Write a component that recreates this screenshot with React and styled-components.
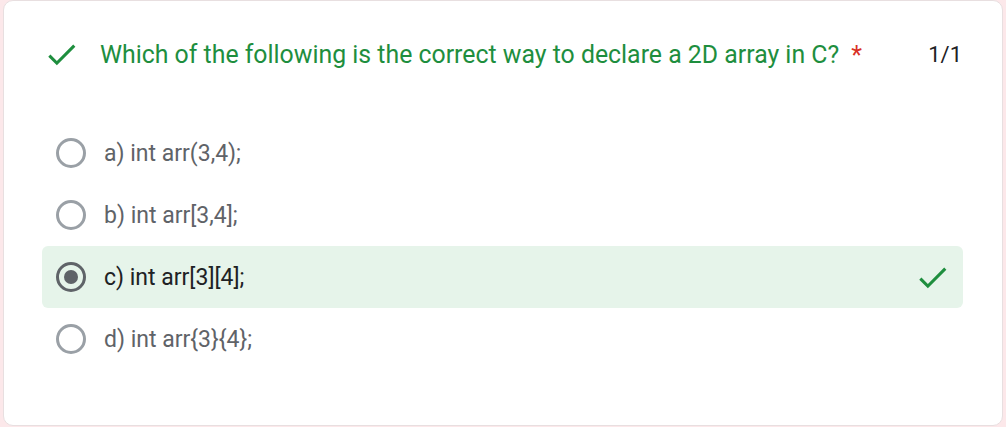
import React from "react";
import styled, { createGlobalStyle } from "styled-components";

const GlobalStyle = createGlobalStyle`
  html, body {
    margin: 0;
    padding: 0;
    background: #fce8ea;
  }
  body {
    font-family: Roboto, "Liberation Sans", Arial, sans-serif;
  }
`;

const Page = styled.div`
  padding: 0 3px 1px;
  height: 427px;
  box-sizing: border-box;
`;

const Card = styled.div`
  background: #fff;
  border: 1px solid #e8dfe0;
  border-radius: 10px;
  height: 426px;
  box-sizing: border-box;
  padding: 34px 39px 0 38px;
`;

const TitleRow = styled.div`
  display: flex;
  align-items: center;
  height: 38px;
`;

const TitleIcon = styled.div`
  width: 37px;
  height: 37px;
  display: flex;
  align-items: center;
  justify-content: center;
  margin-left: 1px;
  margin-right: 20px;
`;

const Title = styled.div`
  flex: 1;
  color: #1e8e3e;
  font-size: 24.85px;
`;

const Required = styled.span`
  color: #d93025;
  margin-left: 12px;
`;

const Score = styled.div`
  color: #202124;
  font-size: 22px;
  padding-right: 1px;
`;

const Options = styled.div`
  display: flex;
  flex-direction: column;
  margin-top: 49px;
`;

const Option = styled.div`
  display: flex;
  align-items: center;
  height: 62px;
  padding: 0 12px 0 14px;
  border-radius: 6px;
  background: ${(p) => (p.$correct ? "#e6f4ea" : "transparent")};
`;

const Radio = styled.div`
  width: 30px;
  height: 30px;
  box-sizing: border-box;
  border-radius: 50%;
  border: 3px solid ${(p) => (p.$checked ? "#5f6368" : "#9aa0a6")};
  display: flex;
  align-items: center;
  justify-content: center;
  margin-right: 18px;

  &::after {
    content: "";
    display: ${(p) => (p.$checked ? "block" : "none")};
    width: 14px;
    height: 14px;
    border-radius: 50%;
    background: #5f6368;
  }
`;

const Label = styled.div`
  flex: 1;
  font-size: 23px;
  color: ${(p) => (p.$checked ? "#202124" : "#5f6368")};
`;

const Check = ({ size = 37 }) => (
  <svg width={size} height={size} viewBox="0 0 24 24" fill="#1e8e3e">
    <path d="M9 16.17 4.83 12l-1.42 1.41L9 19 21 7l-1.41-1.41z" />
  </svg>
);

const options = [
  { label: "a) int arr(3,4);" },
  { label: "b) int arr[3,4];" },
  { label: "c) int arr[3][4];", checked: true },
  { label: "d) int arr{3}{4};" },
];

export default function App() {
  return (
    <Page>
      <GlobalStyle />
      <Card>
        <TitleRow>
          <TitleIcon>
            <Check />
          </TitleIcon>
          <Title>
            Which of the following is the correct way to declare a 2D array in C?
            <Required>*</Required>
          </Title>
          <Score>1/1</Score>
        </TitleRow>
        <Options>
          {options.map((o) => (
            <Option key={o.label} $correct={o.checked}>
              <Radio $checked={o.checked} />
              <Label $checked={o.checked}>{o.label}</Label>
              {o.checked && <Check />}
            </Option>
          ))}
        </Options>
      </Card>
    </Page>
  );
}
